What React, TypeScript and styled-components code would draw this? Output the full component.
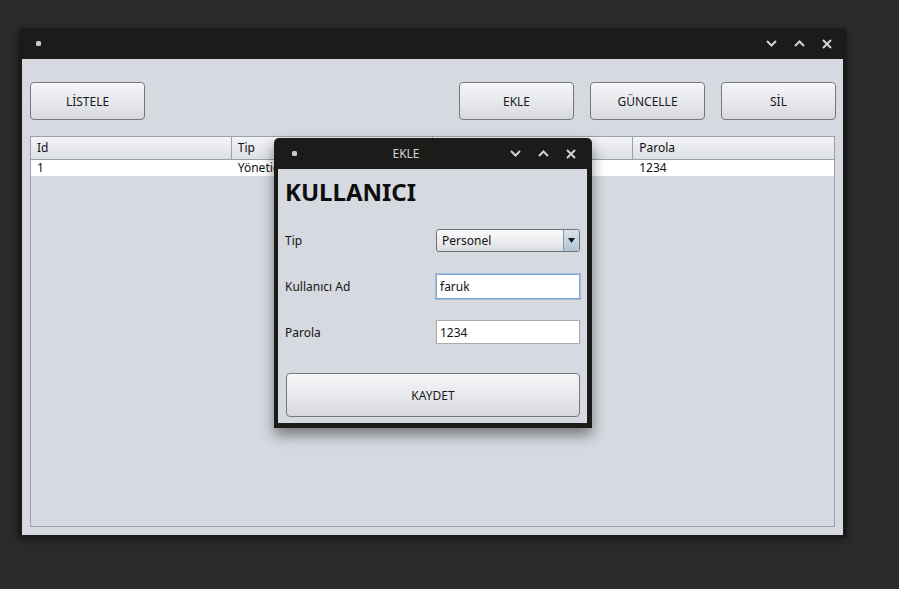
import React from "react";
import styled, { createGlobalStyle } from "styled-components";

const GlobalStyle = createGlobalStyle`
  html, body {
    margin: 0;
    padding: 0;
    background: #2b2b2b;
  }
  body {
    width: 899px;
    height: 589px;
    overflow: hidden;
    font-family: "Noto Sans", "Open Sans", sans-serif;
    font-size: 12px;
    color: #1d1d1d;
  }
`;

const Desktop = styled.div`
  position: relative;
  width: 899px;
  height: 589px;
  box-sizing: border-box;
  padding: 28px 0 0 18px;
`;

const Frame = styled.div<{ $width: number; $pad: string }>`
  width: ${(p) => p.$width}px;
  box-sizing: border-box;
  background: #1b1c1a;
  border-radius: 5px 5px 0 0;
  padding: ${(p) => p.$pad};
  display: flex;
  flex-direction: column;
  box-shadow: 0 2px 9px rgba(0, 0, 0, 0.4);
`;

const DialogFrame = styled(Frame)`
  position: absolute;
  left: 274px;
  top: 138px;
  box-shadow: 0 7px 14px rgba(0, 0, 0, 0.45);
`;

const TitleBar = styled.div`
  height: 31px;
  display: flex;
  align-items: center;
  padding: 0 2px 0 14px;
`;

const Dot = styled.span`
  width: 5px;
  height: 5px;
  border-radius: 1.5px;
  background: #c9c9c9;
  flex: none;
`;

const Caption = styled.span`
  flex: 1;
  text-align: center;
  color: #d4d4d4;
  font-size: 12px;
  padding-left: 14px;
`;

const Controls = styled.div`
  display: flex;
  margin-left: auto;
`;

const Ctrl = styled.span`
  width: 28px;
  height: 14px;
  display: flex;
  align-items: center;
  justify-content: center;
`;

const Body = styled.div<{ $height: number }>`
  background: #d6d9e0;
  height: ${(p) => p.$height}px;
  box-sizing: border-box;
  display: flex;
  flex-direction: column;
`;

const MainBody = styled(Body)`
  padding: 23px 8px 8px;
  gap: 16px;
`;

const DialogBody = styled(Body)`
  padding: 7px 7px 6px;
`;

const Toolbar = styled.div`
  display: flex;
  gap: 16px;
  margin-right: -1px;
`;

const Spacer = styled.div`
  flex: 1;
`;

const Button = styled.button<{ $w?: number; $h?: number }>`
  width: ${(p) => (p.$w ? `${p.$w}px` : "auto")};
  height: ${(p) => p.$h ?? 38}px;
  box-sizing: border-box;
  border: 1px solid #74777c;
  border-radius: 4px;
  background: linear-gradient(#f4f5f7, #e6e8eb 55%, #d6d8dc);
  box-shadow: inset 0 1px 0 #ffffff;
  font-family: inherit;
  font-size: 12px;
  color: #1a1a1a;
  padding: 0;
`;

const Table = styled.div`
  flex: 1;
  border: 1px solid #9ca0a7;
  display: flex;
  flex-direction: column;
`;

const Grid = styled.div<{ $head?: boolean }>`
  display: grid;
  grid-template-columns: repeat(4, 1fr);
  height: ${(p) => (p.$head ? 22 : 16)}px;
  background: ${(p) => (p.$head ? "linear-gradient(#f3f4f6, #dcdfe3)" : "#ffffff")};
  border-bottom: ${(p) => (p.$head ? "1px solid #9ca0a7" : "none")};
`;

const Cell = styled.div<{ $head?: boolean }>`
  padding-left: 6px;
  display: flex;
  align-items: center;
  line-height: 16px;
  color: #111;
  border-right: ${(p) => (p.$head ? "1px solid #9ca0a7" : "none")};
  &:last-child {
    border-right: none;
  }
`;

const Heading = styled.h1`
  margin: 0;
  font-size: 24px;
  line-height: 32px;
  font-weight: 700;
  color: #0e0e0e;
`;

const Form = styled.div`
  display: grid;
  grid-template-columns: 1fr 144px;
  grid-auto-rows: 46px;
  align-items: center;
  margin-top: 9px;
`;

const Label = styled.span`
  font-size: 12px;
  color: #151515;
`;

const Combo = styled.div`
  height: 23px;
  box-sizing: border-box;
  border: 1px solid #6f7379;
  border-radius: 3px;
  display: flex;
  background: linear-gradient(#fbfbfc, #e9ebee 60%, #d9dbdf);
  overflow: hidden;
`;

const ComboText = styled.span`
  flex: 1;
  padding-left: 5px;
  line-height: 21px;
  color: #111;
`;

const ComboArrow = styled.span`
  width: 15px;
  border-left: 1px solid #8796a8;
  background: linear-gradient(#dbe4ee, #b3c4d6);
  display: flex;
  align-items: center;
  justify-content: center;
`;

const Field = styled.div<{ $focus?: boolean }>`
  height: ${(p) => (p.$focus ? 25 : 24)}px;
  box-sizing: border-box;
  background: #fff;
  border: 1px solid ${(p) => (p.$focus ? "#7aa5d6" : "#a7a9ad")};
  box-shadow: ${(p) => (p.$focus ? "0 0 0 1px rgba(122,165,214,0.55)" : "none")};
  padding-left: 3px;
  display: flex;
  align-items: center;
  color: #111;
`;

const SaveRow = styled.div`
  margin-top: 18px;
  padding-left: 1px;
`;

const ChevronDown = () => (
  <svg width="11" height="7" viewBox="0 0 11 7">
    <path d="M1 1l4.5 4.5L10 1" fill="none" stroke="#d2d2d2" strokeWidth="2" />
  </svg>
);

const ChevronUp = () => (
  <svg width="11" height="7" viewBox="0 0 11 7">
    <path d="M1 6l4.5-4.5L10 6" fill="none" stroke="#d2d2d2" strokeWidth="2" />
  </svg>
);

const Close = () => (
  <svg width="10" height="10" viewBox="0 0 10 10">
    <path d="M1 1l8 8M9 1l-8 8" fill="none" stroke="#d2d2d2" strokeWidth="2" />
  </svg>
);

const WindowTitle = ({ title }: { title?: string }) => (
  <TitleBar>
    <Dot />
    {title ? <Caption>{title}</Caption> : <Spacer />}
    <Controls>
      <Ctrl>
        <ChevronDown />
      </Ctrl>
      <Ctrl>
        <ChevronUp />
      </Ctrl>
      <Ctrl>
        <Close />
      </Ctrl>
    </Controls>
  </TitleBar>
);

const columns = ["Id", "Tip", "Kullanıcı Ad", "Parola"];
const rows = [["1", "Yönetici", "admin", "1234"]];

const App = () => {
  return (
    <>
      <GlobalStyle />
      <Desktop>
        <Frame $width={829} $pad="0 4px 3px">
          <WindowTitle />
          <MainBody $height={476}>
            <Toolbar>
              <Button $w={115}>LİSTELE</Button>
              <Spacer />
              <Button $w={115}>EKLE</Button>
              <Button $w={115}>GÜNCELLE</Button>
              <Button $w={115}>SİL</Button>
            </Toolbar>
            <Table>
              <Grid $head>
                {columns.map((c) => (
                  <Cell key={c} $head>
                    {c}
                  </Cell>
                ))}
              </Grid>
              {rows.map((r, i) => (
                <Grid key={i}>
                  {r.map((v, j) => (
                    <Cell key={j}>{v}</Cell>
                  ))}
                </Grid>
              ))}
            </Table>
          </MainBody>
        </Frame>

        <DialogFrame $width={318} $pad="0 5px 5px 4px">
          <WindowTitle title="EKLE" />
          <DialogBody $height={254}>
            <Heading>KULLANICI</Heading>
            <Form>
              <Label>Tip</Label>
              <Combo>
                <ComboText>Personel</ComboText>
                <ComboArrow>
                  <svg width="7" height="5" viewBox="0 0 7 5">
                    <path d="M0 0h7L3.5 5z" fill="#1a1a1a" />
                  </svg>
                </ComboArrow>
              </Combo>
              <Label>Kullanıcı Ad</Label>
              <Field $focus>faruk</Field>
              <Label>Parola</Label>
              <Field>1234</Field>
            </Form>
            <SaveRow>
              <Button $w={294} $h={44}>
                KAYDET
              </Button>
            </SaveRow>
          </DialogBody>
        </DialogFrame>
      </Desktop>
    </>
  );
};

export default App;
